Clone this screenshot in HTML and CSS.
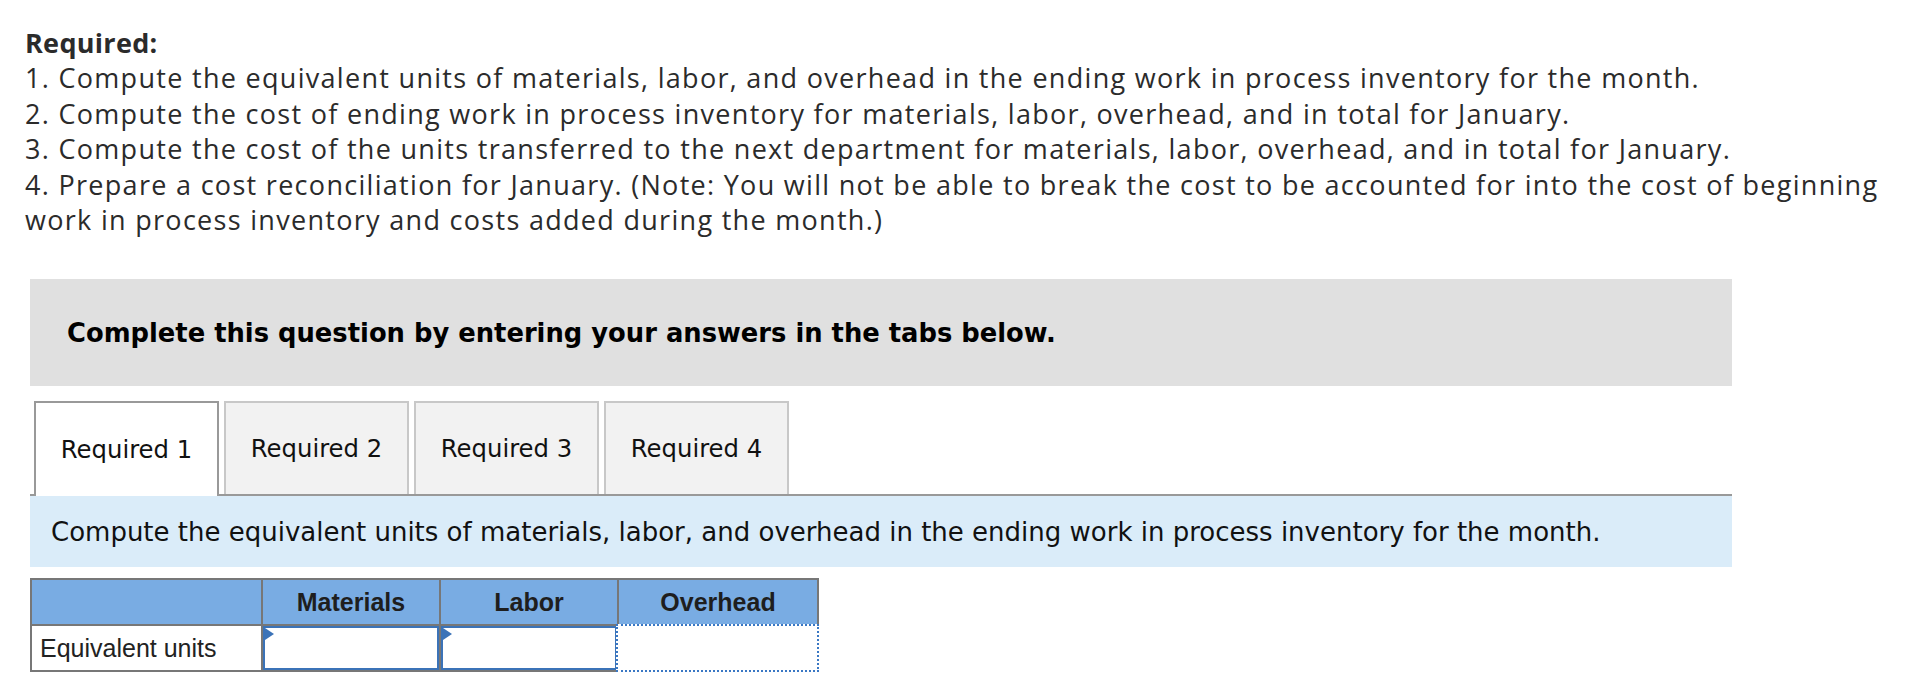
FILE: index.html
```html
<!DOCTYPE html>
<html>
<head>
<meta charset="utf-8">
<link rel="stylesheet" href="styles.css">
</head>
<body>
<div class="page">
  <div class="question">
    <div class="req-title">Required:</div>
    <div>1. Compute the equivalent units of materials, labor, and overhead in the ending work in process inventory for the month.</div>
    <div>2. Compute the cost of ending work in process inventory for materials, labor, overhead, and in total for January.</div>
    <div>3. Compute the cost of the units transferred to the next department for materials, labor, overhead, and in total for January.</div>
    <div>4. Prepare a cost reconciliation for January. (Note: You will not be able to break the cost to be accounted for into the cost of beginning work in process inventory and costs added during the month.)</div>
  </div>

  <div class="panel">
    <div class="instruction">Complete this question by entering your answers in the tabs below.</div>

    <div class="tabs">
      <div class="tab active">Required 1</div>
      <div class="tab">Required 2</div>
      <div class="tab">Required 3</div>
      <div class="tab">Required 4</div>
    </div>

    <div class="prompt">Compute the equivalent units of materials, labor, and overhead in the ending work in process inventory for the month.</div>

    <table class="grid">
      <colgroup>
        <col class="c-label">
        <col class="c-mat">
        <col class="c-lab">
        <col class="c-ovh">
      </colgroup>
      <thead>
        <tr>
          <th></th>
          <th>Materials</th>
          <th>Labor</th>
          <th>Overhead</th>
        </tr>
      </thead>
      <tbody>
        <tr>
          <td class="label">Equivalent units</td>
          <td class="entry"><div class="input flagged"></div></td>
          <td class="entry"><div class="input flagged"></div></td>
          <td class="entry focus"><div class="dotted"></div></td>
        </tr>
      </tbody>
    </table>
  </div>
</div>
</body>
</html>
```

FILE: styles.css
```css
html, body {
  margin: 0;
  padding: 0;
  background: #ffffff;
}

.page {
  padding: 25px 0 0 25px;
}

.question {
  font-family: "Open Sans", "Noto Sans", sans-serif;
  font-size: 27px;
  line-height: 35.4px;
  letter-spacing: 1.3px;
  color: #2b2b2b;
  width: 1884px;
}

.req-title {
  font-weight: 700;
  letter-spacing: 0.3px;
}

.panel {
  margin: 42px 0 0 5px;
  width: 1702px;
}

.instruction {
  background: #e0e0e0;
  height: 107px;
  display: flex;
  align-items: center;
  padding-left: 37px;
  font-family: "DejaVu Sans", Verdana, sans-serif;
  font-weight: bold;
  font-size: 25.8px;
  color: #000;
  box-sizing: border-box;
}

.tabs {
  display: flex;
  gap: 5px;
  margin-top: 15px;
  padding-left: 4px;
  border-bottom: 2px solid #999999;
  height: 93px;
}

.tab {
  width: 185px;
  box-sizing: border-box;
  border: 2px solid #c8c8c8;
  border-bottom: none;
  background: #f2f2f2;
  display: flex;
  align-items: center;
  justify-content: center;
  font-family: "DejaVu Sans", Verdana, sans-serif;
  font-size: 24.3px;
  color: #111;
  height: 93px;
}

.tab.active {
  background: #ffffff;
  border-color: #999999;
  height: 95px;
  position: relative;
}

.prompt {
  background: #daecf9;
  height: 71px;
  display: flex;
  align-items: center;
  padding-left: 21px;
  font-family: "DejaVu Sans", Verdana, sans-serif;
  font-size: 26px;
  color: #111;
  box-sizing: border-box;
}

.grid {
  margin-top: 11px;
  border-collapse: collapse;
  table-layout: fixed;
  width: 787px;
  font-family: "Liberation Sans", Arial, sans-serif;
  font-size: 25px;
}

.c-label { width: 231px; }
.c-mat { width: 178px; }
.c-lab { width: 178px; }
.c-ovh { width: 200px; }

.grid th {
  background: #79ace3;
  border: 2px solid #777777;
  height: 44px;
  padding: 0;
  font-weight: bold;
  color: #1e1e1e;
  text-align: center;
}

.grid td {
  border: 2px solid #777777;
  height: 44px;
  padding: 0;
  color: #222;
}

.grid td.label {
  padding-left: 8px;
}

.grid td.entry {
  position: relative;
}

.input {
  position: absolute;
  inset: 0;
  border: 2px solid #3b73b8;
  background: #fff;
}

.flagged::before {
  content: "";
  position: absolute;
  left: 0;
  top: 0;
  border-style: solid;
  border-width: 6px 0 6px 9px;
  border-color: transparent transparent transparent #3b73b8;
}

.dotted {
  position: absolute;
  top: -2px;
  left: -3px;
  right: -2px;
  bottom: -2px;
  border: 2px dotted #3a78c4;
  background: #fff;
}
```
